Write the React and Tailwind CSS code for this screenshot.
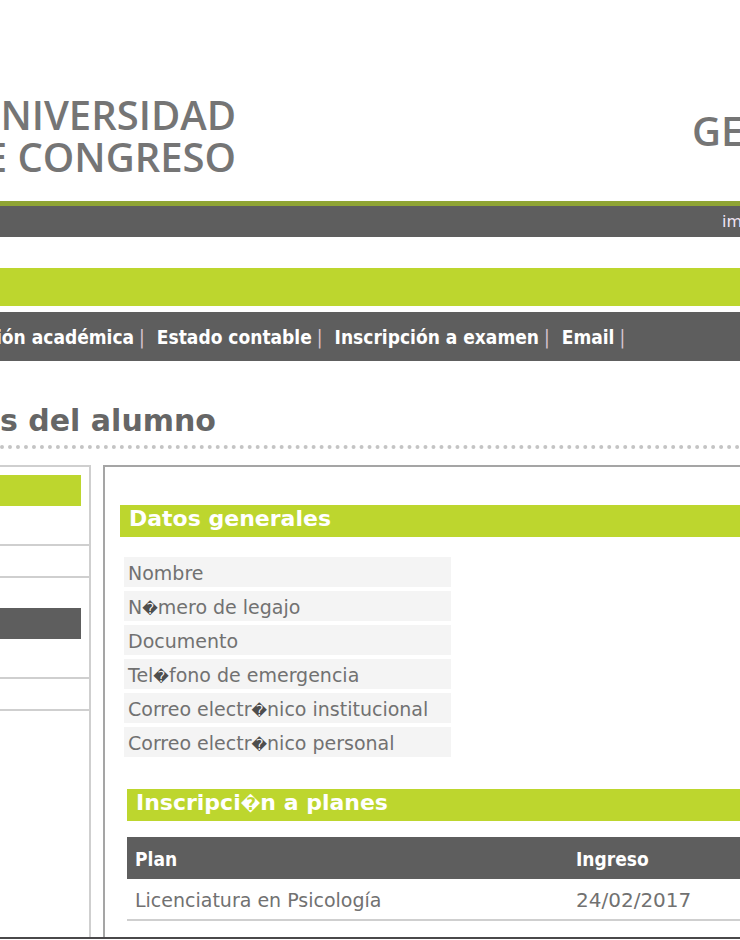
const navLinks = ["ión académica", "Estado contable", "Inscripción a examen", "Email"];

const fields = [
  "Nombre",
  "N\uFFFDmero de legajo",
  "Documento",
  "Tel\uFFFDfono de emergencia",
  "Correo electr\uFFFDnico institucional",
  "Correo electr\uFFFDnico personal",
];

const plans = [{ name: "Licenciatura en Psicología", date: "24/02/2017" }];

// the replacement glyph is wider than the letters around it, so set it smaller
function Label({ text }) {
  return text.split(/(\uFFFD)/).map((part, i) =>
    part === "\uFFFD" ? <span key={i} className="text-[0.8em] text-[#4d4d4d] in-[h2]:text-white">{part}</span> : part
  );
}

function SectionTitle({ text }) {
  return (
    <h2 className="h-8 bg-[#bdd62e] pl-[9px] text-[22px] leading-7 font-bold whitespace-nowrap text-white">
      <Label text={text} />
    </h2>
  );
}

function Header() {
  return (
    <header>
      <div className="flex h-[201px] items-start justify-between pt-[94px] font-['Open_Sans',sans-serif] text-[40px] leading-[42px] font-semibold text-[#757575]">
        <div className="flex w-[236px] flex-col items-end overflow-hidden whitespace-nowrap">
          <span>NIVERSIDAD</span>
          <span>E CONGRESO</span>
        </div>
        <div className="w-12 overflow-hidden pt-4 whitespace-nowrap">GE</div>
      </div>
      <div className="flex h-9 justify-end border-t-[5px] border-[#8fa434] bg-[#5e5e5e] text-base leading-8 text-[#f0e4f4]">
        <a href="#imprimir" className="w-[18px] overflow-hidden">im</a>
      </div>
    </header>
  );
}

function Nav() {
  return (
    <nav className="flex h-[49px] items-center overflow-hidden bg-[#5e5e5e] pt-0.5 font-['DejaVu_Sans_Condensed','DejaVu_Sans',sans-serif] text-[19px] whitespace-nowrap text-white">
      <div className="-ml-1 flex gap-3">
        {navLinks.map((l) => (
          <span key={l} className="flex gap-[5px]">
            <a href="#nav" className="font-bold">{l}</a>
            <span className="text-[#d8c4d0]">|</span>
          </span>
        ))}
      </div>
    </nav>
  );
}

function Sidebar() {
  return (
    <aside className="w-[91px] shrink-0 border-t-2 border-r-2 border-[#cfcfcf] pt-2">
      <div className="mr-2 h-[31px] bg-[#bdd62e]" />
      <div className="h-10 border-b-2 border-[#cfcfcf]" />
      <div className="h-8 border-b-2 border-[#cfcfcf]" />
      <div className="mt-[30px] mr-2 h-[31px] bg-[#5e5e5e]" />
      <div className="h-10 border-b-2 border-[#cfcfcf]" />
      <div className="h-8 border-b-2 border-[#cfcfcf]" />
    </aside>
  );
}

export default function App() {
  return (
    <div className="overflow-hidden bg-white font-['DejaVu_Sans',sans-serif] text-[#717171]">
      <Header />
      <div className="mt-[31px] mb-[6px] h-[38px] bg-[#bdd62e]" />
      <Nav />
      <h1 className="mt-10 h-[48px] border-b-4 border-dotted border-[#c4c4c4] text-[30px] leading-10 font-bold text-[#666666]">
        s del alumno
      </h1>
      <div className="mt-4 flex gap-3 border-b-2 border-[#4a484a]">
        <Sidebar />
        <main className="min-w-0 flex-1 border-t-2 border-l-2 border-[#a5a5a5] pt-[38px] pb-4 pl-[15px]">
          <SectionTitle text="Datos generales" />
          <ul className="mt-5 ml-1 flex w-[327px] flex-col gap-1 text-[19px]">
            {fields.map((f) => (
              <li key={f} className="h-[30px] bg-[#f4f4f4] pl-1 leading-8 whitespace-nowrap">
                <Label text={f} />
              </li>
            ))}
          </ul>
          <div className="mt-8 ml-[7px]">
            <SectionTitle text={"Inscripci\uFFFDn a planes"} />
            <table className="mt-4 w-full table-fixed text-left text-[19px]">
              <thead>
                <tr className="h-[42px] bg-[#5e5e5e] font-['DejaVu_Sans_Condensed','DejaVu_Sans',sans-serif] text-white">
                  <th className="w-[441px] pt-0.5 pl-2">Plan</th>
                  <th className="pt-0.5 pl-2">Ingreso</th>
                </tr>
              </thead>
              <tbody>
                {plans.map((p) => (
                  <tr key={p.name} className="h-[41px] border-b-2 border-[#cfcfcf]">
                    <td className="pt-0.5 pl-2">{p.name}</td>
                    <td className="pt-0.5 pl-2 text-xl">{p.date}</td>
                  </tr>
                ))}
              </tbody>
            </table>
          </div>
        </main>
      </div>
    </div>
  );
}
